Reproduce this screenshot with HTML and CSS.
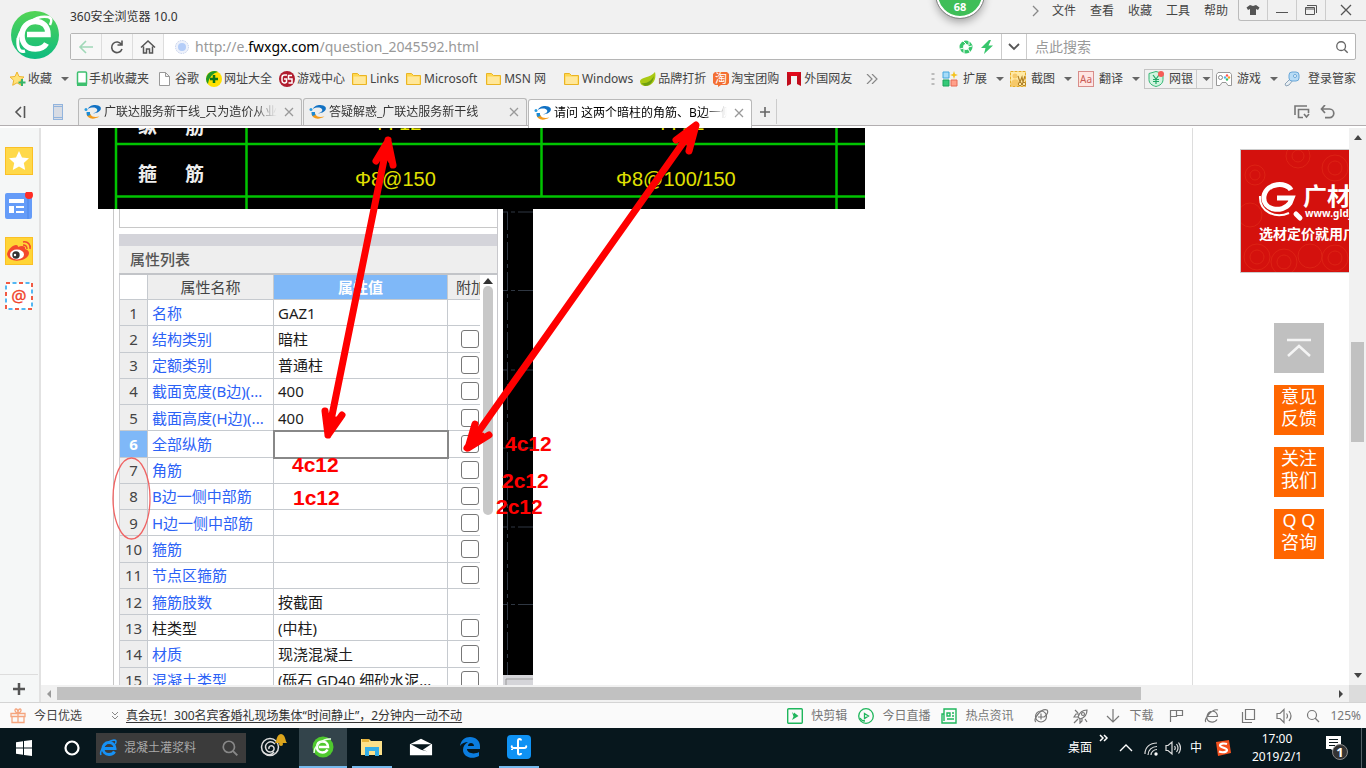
FILE: index.html
```html
<!DOCTYPE html>
<html lang="zh-CN">
<head>
<meta charset="utf-8">
<title>360安全浏览器 10.0</title>
<link rel="stylesheet" href="styles.css">
</head>
<body>
<svg class="defs" aria-hidden="true">
  <symbol id="folder" viewBox="0 0 16 16"><path d="M.5 2.500h5l2 2h7v9h-14z" fill="#ffd84f" stroke="#eab424"/><path d="M1.500 5.500h12v7.500h-12z" fill="#ffe79a"/></symbol>
  <symbol id="caret" viewBox="0 0 8 4"><path d="M0 0h8L4 4z" fill="#666"/></symbol>
  <symbol id="fav" viewBox="0 0 18 16"><path d="M4 5C5 .5 14-.5 16.500 3c1.500 3-2 6-7.500 6.300 3.500-1 5-2.500 4-4C12 3 7 3 4 5z" fill="#1272c4"/><path d="M2.500 9.500C3 14.500 9 16.500 15.500 12.500c-4.500 1-8.500.5-9.500-3z" fill="#f39a1b"/><path d="M2.500 8c0 1.500.5 3 1 4l3-1C6 10 5.800 9 6 8z" fill="#1a8ad6"/><circle cx="2" cy="5.500" r="1.500" fill="#2a9be0"/></symbol>
  <symbol id="close" viewBox="0 0 10 10"><path d="M1 1l8 8M9 1L1 9" stroke="#999" stroke-width="1.300"/></symbol>
  <symbol id="glass" viewBox="0 0 16 16"><circle cx="7" cy="7" r="5" fill="none" stroke="currentColor" stroke-width="1.500"/><path d="M10.500 10.500l4 4" stroke="currentColor" stroke-width="1.700"/></symbol>
</svg>

<header class="chrome">
  <div class="top">
    <svg class="logo" viewBox="0 0 50 50"><defs><linearGradient id="lg" x1="0" y1="0" x2="0" y2="1"><stop offset="0" stop-color="#53d454"/><stop offset="1" stop-color="#0dbb81"/></linearGradient></defs><circle cx="25" cy="25" r="24" fill="url(#lg)"/><path d="M17 24.500h21c0-8-5-13-12.500-13-8 0-13.500 6-13.500 14s5 13.500 13.500 13.500c5 0 9-2 11-5.500" fill="none" stroke="#fff" stroke-width="5.500"/><path d="M8 28C12 15 26 5 38 7c4 1 4 4 2 8" fill="none" stroke="#fff" stroke-width="2.500"/><path d="M8 28c-1 9 1 15 7 13" fill="none" stroke="#fff" stroke-width="3"/></svg>
    <div class="head">
      <div class="title-row">
        <span>360安全浏览器 10.0</span>
        <nav class="menu">
          <svg width="8" height="12" viewBox="0 0 8 12"><path d="M1 1l5 5-5 5" fill="none" stroke="#888" stroke-width="1.300"/></svg>
          <button>文件</button><button>查看</button><button>收藏</button><button>工具</button><button>帮助</button>
        </nav>
        <div class="wins">
          <button aria-label="皮肤"><svg width="14" height="12" viewBox="0 0 14 12"><path d="M4 1l3 1 3-1 3.500 2.500L12 6l-2-1v6H4V5L2 6 .5 3.500z" fill="#555"/></svg></button>
          <button aria-label="最小化"><svg width="14" height="12" viewBox="0 0 14 12"><path d="M1 8.500h12" stroke="#555"/></svg></button>
          <button aria-label="还原"><svg width="14" height="12" viewBox="0 0 14 12"><path d="M1.500 3.500h9v7h-9zM1 5h10M3 1.500h9.500V9" fill="none" stroke="#555"/></svg></button>
          <button aria-label="关闭"><svg width="14" height="12" viewBox="0 0 14 12"><path d="M2 1l10 10M12 1L2 11" stroke="#555" stroke-width="1.300"/></svg></button>
        </div>
      </div>
      <div class="address">
        <button class="nav" aria-label="后退"><svg width="16" height="14" viewBox="0 0 16 14"><path d="M15 7H2M8 1L2 7l6 6" fill="none" stroke="#a0d8b8" stroke-width="1.600"/></svg></button>
        <button class="nav" aria-label="刷新"><svg width="16" height="16" viewBox="0 0 16 16"><path d="M12.500 5.500A5.300 5.300 0 1 0 13 10M13 1.500V6H8.500" fill="none" stroke="#555" stroke-width="1.600"/></svg></button>
        <button class="nav" aria-label="主页"><svg width="16" height="16" viewBox="0 0 16 16"><path d="M1 8.500L8 2l7 6.500M3.500 7.500v6.500h3v-4h3v4h3V7.500" fill="none" stroke="#555" stroke-width="1.500"/></svg></button>
        <svg class="site" viewBox="0 0 14 14"><circle cx="7" cy="7" r="6.500" fill="#eef2fb" stroke="#c4cfea" stroke-dasharray="1.500 1"/><circle cx="7" cy="7" r="4" fill="#b4cdf8"/></svg>
        <span class="url">http://e.<b>fwxgx.com</b>/question_2045592.html</span>
        <svg width="14" height="14" viewBox="0 0 14 14"><circle cx="7" cy="7" r="4.700" fill="none" stroke="#37c66c" stroke-width="3.600"/><path d="M4 1l3 3M10 1v4M13 6l-4 1M11 12l-2-3M5 13v-4M1 9l4-1" stroke="#fff"/></svg>
        <svg class="bolt" width="12" height="14" viewBox="0 0 12 14"><path d="M8 0L0 8h4.500L3 14l9-8.500H7.500L10 0z" fill="#37c66c"/></svg>
        <button class="drop" aria-label="展开"><svg width="12" height="8" viewBox="0 0 12 8"><path d="M1 1l5 5 5-5" fill="none" stroke="#555" stroke-width="1.800"/></svg></button>
        <input class="search" type="text" placeholder="点此搜索" aria-label="搜索">
        <button class="go" aria-label="搜索"><svg width="14" height="14"><use href="#glass"/></svg></button>
      </div>
    </div>
    <div class="ball">68</div>
  </div>

  <div class="marks">
    <a href="#"><svg viewBox="0 0 16 16"><path d="M7 1l2 4.500 5 .5-3.700 3.300 1 5L7 11.800 2.700 14.300l1-5L0 6l5-.5z" fill="#ffe27a" stroke="#eeb52f"/><path d="M12 8v7M8.500 11.500h7" stroke="#36b56a" stroke-width="2"/></svg>收藏</a>
    <svg class="caret first"><use href="#caret"/></svg>
    <a href="#"><svg class="ph" viewBox="0 0 12 16"><rect x="1.500" y="1" width="9" height="13" rx="1" fill="#fff" stroke="#3dc06f" stroke-width="1.500"/><path d="M1 11.500h10V15H1z" fill="#3dc06f"/></svg>手机收藏夹</a>
    <a href="#" class="wide"><svg viewBox="0 0 16 16"><path d="M3.500 1.500h6l4 4v9h-10zM9.500 1.500v4h4" fill="#fff" stroke="#999"/></svg>谷歌</a>
    <a href="#"><svg viewBox="0 0 16 16"><circle cx="8" cy="8" r="8" fill="#ffe100"/><path d="M2 3a8 8 0 0 1 10-2C7 2 3 6 2 13A8 8 0 0 1 2 3z" fill="#219a27"/><path d="M8 4v8M4 8h8" stroke="#0b7517" stroke-width="2.500"/></svg>网址大全</a>
    <a href="#"><svg viewBox="0 0 16 16"><circle cx="8" cy="8" r="8" fill="#b01c2e"/><path d="M8 4H5.500A2.500 2.500 0 0 0 3 6.500v3A2.500 2.500 0 0 0 7.500 11V8H5M13 4.500H9.500V8H13v4H9.500" fill="none" stroke="#fff" stroke-width="1.500"/></svg>游戏中心</a>
    <a href="#"><svg><use href="#folder"/></svg>Links</a>
    <a href="#"><svg><use href="#folder"/></svg>Microsoft</a>
    <a href="#" class="msn"><svg><use href="#folder"/></svg>MSN 网</a>
    <a href="#"><svg><use href="#folder"/></svg>Windows</a>
    <a href="#"><svg viewBox="0 0 16 16"><path d="M15 1c2 8-3 14-9 14-4 0-6-2-6-5 1-4 10-3 15-9z" fill="#aac913"/><path d="M1 12c6 1 10-2 13-7-1 7-5 10-9 10z" fill="#6f9f10"/></svg>品牌打折</a>
    <a href="#"><svg viewBox="0 0 16 16"><path d="M2 1h12l2 2v9l-2 2H8l-3 2v-2H2l-2-2V3z" fill="#f36f33"/><text x="2" y="12" font-size="12" fill="#fff">淘</text></svg>淘宝团购</a>
    <a href="#"><svg viewBox="0 0 16 16"><path d="M1 1h14v14l-4-2V5H5v8l-4 2z" fill="#c10d1d"/><path d="M5 5h6L15 1H1z" fill="#e2081b"/></svg>外国网友</a>
    <svg class="more" viewBox="0 0 12 10"><path d="M1 0l5 5-5 5M6 0l5 5-5 5" fill="none" stroke="#888" stroke-width="1.200"/></svg>
    <div class="tools">
      <svg class="grip" viewBox="0 0 4 14"><path d="M2 1v13" stroke="#bbb" stroke-width="3" stroke-dasharray="2 3"/></svg>
      <a href="#"><svg viewBox="0 0 16 16"><path d="M1 1h6v6H1z" fill="#a8dcf8" stroke="#44a6de"/><path d="M1 9h6v6H1z" fill="#35c978" stroke="#1ba45a"/><path d="M9 9h6v6H9z" fill="#ffa08a" stroke="#e66b55"/><path d="M12 0l1 3 3 1-3 1-1 3-1-3-3-1 3-1z" fill="#f4c21d"/></svg>扩展</a><svg class="caret"><use href="#caret"/></svg>
      <a href="#"><svg viewBox="0 0 16 16"><rect x=".5" y=".5" width="15" height="15" fill="#ffeaa7" stroke="#e7ad27" stroke-dasharray="3 1"/><circle cx="5" cy="5" r="2.500" fill="#f6c96a"/><path d="M1 13c0-6 7-6 8-2v4H1z" fill="#f6c96a"/><path d="M8 5l2 6 2-5 1 5 2-6" fill="none" stroke="#b18127" stroke-width="1.200"/><circle cx="10" cy="13" r="1.700" fill="none" stroke="#b18127"/><circle cx="14" cy="13" r="1.700" fill="none" stroke="#b18127"/></svg>截图</a><svg class="caret"><use href="#caret"/></svg>
      <a href="#"><svg viewBox="0 0 16 16"><rect x=".5" y=".5" width="15" height="15" fill="#ffe5e2" stroke="#d88d8a"/><text x="2" y="12" font-size="10" fill="#c95b55">Aa</text></svg>翻译</a><svg class="caret"><use href="#caret"/></svg>
      <span class="bank"><a href="#"><svg viewBox="0 0 16 16"><path d="M8 .5l7 2v6c0 4-3 6-7 7-4-1-7-3-7-7v-6z" fill="#d0f4df" stroke="#36b775"/><path d="M5 4l3 4 3-4M8 8v5M5 8.500h6M5 10.500h6" fill="none" stroke="#21a764" stroke-width="1.200"/><circle cx="13" cy="3" r="3" fill="#f65d58"/></svg>网银</a><svg class="caret"><use href="#caret"/></svg></span>
      <a href="#"><svg viewBox="0 0 16 16"><path d="M2 1.500h12l1.500 2v11H12l-2-3H6l-2 3H.5v-11z" fill="#fff" stroke="#999"/><circle cx="4.500" cy="6.500" r="2" fill="none" stroke="#888"/><circle cx="9" cy="6.500" r="1.200" fill="#4db6ec"/><circle cx="11" cy="4.500" r="1.200" fill="#f55"/><circle cx="13" cy="6.500" r="1.200" fill="#fb9c27"/><circle cx="11" cy="8.500" r="1.200" fill="#3b6"/></svg>游戏</a><svg class="caret"><use href="#caret"/></svg>
      <a href="#" class="key"><svg viewBox="0 0 16 16"><path d="M7 7l-6 6 1 2 3-1 4-5" fill="#e8eef3" stroke="#8ea4b8"/><rect x="5" y="1" width="10" height="9" rx="3" fill="#b8dcf6" stroke="#6aa7d8"/><circle cx="11" cy="5" r="1.500" fill="#fff" stroke="#6aa7d8"/></svg>登录管家</a>
    </div>
  </div>

  <div class="tabs">
    <button class="fold" aria-label="收起"><svg width="12" height="12" viewBox="0 0 12 12"><path d="M7 1L2 6l5 5M10.500 0v12" fill="none" stroke="#555" stroke-width="1.600"/></svg></button>
    <button class="phone" aria-label="手机"><svg width="10" height="16" viewBox="0 0 10 16"><rect x=".5" y=".5" width="9" height="15" fill="#d8dce4" stroke="#92b4dd"/><path d="M1 2.500h8M1 13.500h8" stroke="#92b4dd"/></svg></button>
    <div class="tab"><svg class="fav"><use href="#fav"/></svg><a href="#">广联达服务新干线_只为造价从业者</a><button aria-label="关闭标签"><svg width="10" height="10"><use href="#close"/></svg></button></div>
    <div class="tab"><svg class="fav"><use href="#fav"/></svg><a href="#">答疑解惑_广联达服务新干线</a><button aria-label="关闭标签"><svg width="10" height="10"><use href="#close"/></svg></button></div>
    <div class="tab on"><svg class="fav"><use href="#fav"/></svg><a href="#">请问 这两个暗柱的角筋、B边一侧</a><button aria-label="关闭标签"><svg width="10" height="10"><use href="#close"/></svg></button></div>
    <button class="add" aria-label="新标签"><svg width="10" height="10" viewBox="0 0 10 10"><path d="M5 0v10M0 5h10" stroke="#666" stroke-width="1.600"/></svg></button>
    <div class="tabend">
      <svg width="16" height="14" viewBox="0 0 16 14"><path d="M1 10V1h12M9 12.500H4.500v-8h10V8M10 9l2.500 3L15 9" fill="none" stroke="#777" stroke-width="1.600"/></svg>
      <svg width="15" height="14" viewBox="0 0 15 14"><path d="M2 4h7.500a4.300 4.300 0 0 1 0 8.600H5M5 0L1.500 4 5 8" fill="none" stroke="#777" stroke-width="1.700"/></svg>
    </div>
  </div>
</header>

<main class="main">
  <aside class="side">
    <svg viewBox="0 0 28 28"><rect x=".5" y=".5" width="27" height="27" fill="#ffd94a" stroke="#fbc026"/><path d="M14 4l3 6.500 7 .8-5.200 4.800 1.400 6.900-6.200-3.500L7.800 23l1.400-6.900L4 11.300l7-.8z" fill="#fff"/></svg>
    <svg viewBox="0 0 28 28"><rect x="0" y="1" width="27" height="26" rx="2" fill="#659cf8"/><path d="M23 1v26" stroke="#4d86e8"/><path d="M4 7h15v4H4zM4 14h5v7H4zM11 14h8v2h-8zM11 19h8v2h-8z" fill="#fff"/><circle cx="24" cy="3" r="4" fill="#ff2c25"/></svg>
    <svg viewBox="0 0 28 28"><rect x=".5" y=".5" width="27" height="27" fill="#ffd536" stroke="#fbc026"/><path d="M2 17C3 12 8 8 11 8c2 0 2 1 2 2 4-2 8-1 7 2 4 1 5 4 3 7-4 6-20 7-21-2z" fill="#f3492c"/><ellipse cx="12" cy="17.500" rx="7" ry="5" fill="#fff"/><circle cx="11" cy="18" r="3.700" fill="#333"/><circle cx="10" cy="18" r="1.200" fill="#fff"/><path d="M18 8c3 0 4 2 4 4M18 5c5-1 8 3 7 7" fill="none" stroke="#f3492c" stroke-width="1.500"/></svg>
    <svg viewBox="0 0 28 28"><rect x="1" y="1" width="26" height="26" fill="#fff" stroke="#f15a43" stroke-width="2" stroke-dasharray="4 9"/><rect x="1" y="1" width="26" height="26" fill="none" stroke="#53b7f3" stroke-width="2" stroke-dasharray="4 9" stroke-dashoffset="-6.500"/><text x="14" y="20" text-anchor="middle" font-size="17" fill="#f0442c" stroke="#f0442c" stroke-width=".3">@</text></svg>
    <button aria-label="添加"><svg viewBox="0 0 14 14"><path d="M7 1v12M1 7h12" stroke="#555" stroke-width="2.500"/></svg></button>
  </aside>
  <div class="pane">
    <div class="view">
      <article class="article">
        <svg class="cad" viewBox="98 128 767 81">
          <path d="M98 128h767v81H98z"/>
          <path d="M116 128v81M246.500 128v81M541.500 128v68M836.500 128v81M116 144h749M116 196.500h749" stroke="#00c400" stroke-width="2.500"/>
          <g fill="#eee" font-size="19" class="hei"><text x="138" y="134">纵</text><text x="185" y="134">筋</text><text x="138" y="181">箍</text><text x="185" y="181">筋</text></g>
          <g fill="#e0e000" font-size="20" class="cadnum"><text x="372" y="130">4Φ12</text><text x="355" y="186">Φ8@150</text><text x="655" y="130">4Φ12</text><text x="616" y="186">Φ8@100/150</text></g>
        </svg>
        <div class="shot">
          <div class="panel">
            <div class="stub"></div>
            <div class="bar"></div>
            <h2>属性列表</h2>
            <div class="gridwrap">
              <table>
                <thead><tr><th class="n"></th><th>属性名称</th><th class="cur">属性值</th><th class="x">附加</th></tr></thead>
                <tbody>
                <tr><td>1</td><td>名称</td><td>GAZ1</td><td></td></tr>
                <tr><td>2</td><td>结构类别</td><td>暗柱</td><td><input type="checkbox" aria-label="附加 2"></td></tr>
                <tr><td>3</td><td>定额类别</td><td>普通柱</td><td><input type="checkbox" aria-label="附加 3"></td></tr>
                <tr><td>4</td><td>截面宽度(B边)(...</td><td>400</td><td><input type="checkbox" aria-label="附加 4"></td></tr>
                <tr><td>5</td><td>截面高度(H边)(...</td><td>400</td><td><input type="checkbox" aria-label="附加 5"></td></tr>
                <tr class="sel"><td>6</td><td>全部纵筋</td><td></td><td><input type="checkbox" aria-label="附加 6"></td></tr>
                <tr><td>7</td><td>角筋</td><td></td><td><input type="checkbox" aria-label="附加 7"></td></tr>
                <tr><td>8</td><td>B边一侧中部筋</td><td></td><td><input type="checkbox" aria-label="附加 8"></td></tr>
                <tr><td>9</td><td>H边一侧中部筋</td><td></td><td><input type="checkbox" aria-label="附加 9"></td></tr>
                <tr><td>10</td><td>箍筋</td><td></td><td><input type="checkbox" aria-label="附加 10"></td></tr>
                <tr><td>11</td><td>节点区箍筋</td><td></td><td><input type="checkbox" aria-label="附加 11"></td></tr>
                <tr><td>12</td><td>箍筋肢数</td><td>按截面</td><td></td></tr>
                <tr><td>13</td><td class="blk">柱类型</td><td>(中柱)</td><td><input type="checkbox" aria-label="附加 13"></td></tr>
                <tr><td>14</td><td>材质</td><td>现浇混凝土</td><td><input type="checkbox" aria-label="附加 14"></td></tr>
                <tr><td>15</td><td>混凝土类型</td><td>(砾石 GD40 细砂水泥...</td><td><input type="checkbox" aria-label="附加 15"></td></tr>
                </tbody>
              </table>
              <div class="gscroll"><svg width="10" height="6" viewBox="0 0 10 6"><path d="M0 6l5-6 5 6z" fill="#333"/></svg><i></i></div>
            </div>
          </div>
          <svg class="strip" viewBox="503 209 30 476"><path d="M503 209h30v466h-30z"/><path d="M503 675h30v10h-30z" fill="#d5d5d9"/><path d="M506 685v-6h27" fill="none" stroke="#999"/><path d="M507.500 212v463" stroke="#2f3742" stroke-dasharray="18 4 4 4"/><path d="M503 212h30M503 290.500h30M503 370h30M503 448h30M503 527h30M503 604.500h30" stroke="#2f3742" stroke-dasharray="5 3 4 3 20"/></svg>
        </div>
      </article>
      <aside class="right">
        <a href="#" class="ad" aria-label="广材网"><svg viewBox="1241 150 108 122">
          <path d="M1241 150h108v122h-108z" fill="#d4110d"/>
          <g fill="none" stroke="#e02a18" opacity=".7"><circle cx="1255" cy="175" r="10"/><circle cx="1255" cy="175" r="5"/><circle cx="1298" cy="156" r="12"/><circle cx="1298" cy="156" r="6"/><circle cx="1335" cy="168" r="13"/><circle cx="1335" cy="168" r="7"/><circle cx="1257" cy="257" r="13"/><circle cx="1257" cy="257" r="7"/><circle cx="1284" cy="262" r="13"/><circle cx="1284" cy="262" r="7"/><circle cx="1310" cy="256" r="12"/><circle cx="1335" cy="258" r="13"/><circle cx="1335" cy="258" r="7"/><circle cx="1250" cy="215" r="12"/></g>
          <path d="M1291 190c-4-8-24-8-27 6-2 14 18 18 26 7l2-5h-15" fill="none" stroke="#fff" stroke-width="5"/><path d="M1260 196c-1 16 16 23 29 17" fill="none" stroke="#fff" stroke-width="2"/><path d="M1296 214l4 4" stroke="#fff" stroke-width="5" stroke-linecap="round"/>
          <g fill="#fff" font-weight="700"><text x="1303" y="205" font-size="24">广材</text><text x="1305" y="217" font-size="10">www.gldjc.com</text><text x="1259" y="239" font-size="14">选材定价就用广材</text></g>
        </svg></a>
        <div class="floats">
          <a href="#" class="up" aria-label="返回顶部"><svg width="26" height="20" viewBox="0 0 26 20"><path d="M1 2h24M2 18L13 8l11 10" fill="none" stroke="#f4f4f4" stroke-width="2.500"/></svg></a>
          <a href="#">意见<br>反馈</a><a href="#">关注<br>我们</a><a href="#">Q Q<br>咨询</a>
        </div>
      </aside>
    </div>
    <div class="hs"><svg width="6" height="8" viewBox="0 0 6 8"><path d="M5 0v8L1 4z" fill="#999"/></svg><div><i></i></div><svg width="6" height="8" viewBox="0 0 6 8"><path d="M1 0v8l4-4z" fill="#444"/></svg></div>
  </div>
  <div class="vs"><svg width="8" height="5" viewBox="0 0 8 5"><path d="M0 5l4-5 4 5z" fill="#444"/></svg><div><i></i></div><svg width="8" height="5" viewBox="0 0 8 5"><path d="M0 0l4 5 4-5z" fill="#444"/></svg><b></b></div>

  <svg class="notes" viewBox="0 128 1366 557" width="1366" height="557">
    <g fill="none" stroke="red" stroke-width="7" stroke-linecap="round" stroke-linejoin="round">
      <path d="M388 140L328 435M376 161l12-20 5 24M325 411l3 24 14-20M383 158l5-12 3 14M328 418v12l9-10"/>
      <path d="M695 126L467 448M676 140l20-15-7 26M475 424l-7 24 21-13M684 141l9-11-3 14M477 433l-6 11 11-8"/>
    </g>
    <ellipse cx="131.500" cy="498.500" rx="18.500" ry="40.500" fill="none" stroke="#f06464" stroke-width="1.300"/>
    <g class="red"><text x="292" y="472">4c12</text><text x="293" y="505">1c12</text><text x="505" y="451">4c12</text><text x="502" y="488">2c12</text><text x="496" y="514">2c12</text></g>
  </svg>
</main>

<div class="status">
  <a href="#" class="gift"><svg viewBox="0 0 16 16"><path d="M1 5.500h14v3H1zM2 8.500h12v6H2zM8 5.500v9M8 5C5 5 4 1 6 1s2 4 2 4 0-4 2-4 1 4-2 4" fill="none" stroke="#f5a57e" stroke-width="1.300"/></svg>今日优选</a>
  <svg class="dbl" viewBox="0 0 8 8"><path d="M1 0l3 3 3-3M1 4l3 3 3-3" fill="none" stroke="#888"/></svg>
  <a href="#" class="news">真会玩！300名宾客婚礼现场集体“时间静止”，2分钟内一动不动</a>
  <div class="stools">
    <a href="#"><svg viewBox="0 0 16 16"><rect x=".7" y=".7" width="14.600" height="14.600" rx="1" fill="none" stroke="#1fb65c" stroke-width="1.400"/><path d="M5 4l2 2v-1.500L11.500 8 5 12l1.500-3.500z" fill="#1fb65c"/></svg>快剪辑</a>
    <a href="#"><svg viewBox="0 0 16 16"><circle cx="8" cy="8" r="7.300" fill="none" stroke="#1fb65c" stroke-width="1.300"/><path d="M6.500 5.500l4 2.500-4 2.500zM2 10c1 2 3 3 5 3" fill="none" stroke="#1fb65c" stroke-width="1.300"/></svg>今日直播</a>
    <a href="#"><svg viewBox="0 0 16 16"><path d="M3 1h12v14H1V6h2zM3 5v8M6 5h3v3H6zM11 5h2M11 8h2M6 11h7" fill="none" stroke="#1fb65c" stroke-width="1.400"/></svg>热点资讯</a>
    <button aria-label="加速" class="i1"><svg viewBox="0 0 16 16"><circle cx="8" cy="8.500" r="5.500"/><path d="M3 14C-1 12 8 0 14 2c2 2-1 6-3 7H5M8 5.500v6"/></svg></button>
    <button aria-label="火箭" class="i2"><svg viewBox="0 0 16 16"><path d="M14 2C9 2 6 6 5 9l2 2c4-1 7-4 7-9zM6 6H3L1 9h4M9 10v3l-2 2v-4M5 11l-4 4M2 2l3 3M12 11l2 3"/><circle cx="10" cy="6" r="1.500"/></svg></button>
    <button class="dl"><svg viewBox="0 0 16 16"><path d="M8 1v13M2 8l6 6 6-6"/></svg>下载</button>
    <button aria-label="标记"><svg viewBox="0 0 16 16"><path d="M2.500 14V2.500h6v6h-6M8.500 2.500h6v5h-6"/></svg></button>
    <button aria-label="内核"><svg viewBox="0 0 16 16"><path d="M3 8.500h10.500c0-7-9.500-7-10.500 0-1 7 8 6.500 10 3M2 14C-1 12 8 0 14 2"/></svg></button>
    <button aria-label="窗口"><svg viewBox="0 0 16 16"><path d="M5.500 1.500h9v10h-9zM2.500 4v10.500H12"/></svg></button>
    <button aria-label="声音"><svg viewBox="0 0 16 16"><path d="M1 5.500h3l4-4v13l-4-4H1zM10.500 5.500q2 2.500 0 5M13 3q4 5 0 10"/></svg></button>
    <button class="zoom"><svg viewBox="0 0 16 16"><circle cx="7" cy="7" r="4.500"/><path d="M10 10l4 4"/></svg>125%</button>
  </div>
</div>

<footer class="task">
  <button aria-label="开始"><svg viewBox="0 0 16 16"><path d="M0 2.300L7 1.300v6.200H0zM8 1.100L16 0v7.500H8zM0 8.500h7v6.200l-7-1zM8 8.500h8V16l-8-1.100z" fill="#fff"/></svg></button>
  <button aria-label="Cortana"><svg viewBox="0 0 16 16"><circle cx="8" cy="8" r="6.500" fill="none" stroke="#fff" stroke-width="2.200"/></svg></button>
  <label class="tsearch"><svg class="ie" viewBox="0 0 18 18"><path d="M5 9.500h11c0-4-3-6-6-6-4 0-6 3-6 6s2 6 6 6c2.500 0 4.500-1 5.500-3" fill="none" stroke="#1691f5" stroke-width="3"/><path d="M2 16C0 12 7 2 15 1c3 0 2 3 1 4" fill="none" stroke="#1691f5" stroke-width="1.500"/></svg><input type="text" value="混凝土灌浆料" aria-label="搜索"><svg class="mg"><use href="#glass"/></svg></label>
  <button class="swirl" aria-label="助手"><svg viewBox="0 0 30 28"><g fill="none" stroke="#ddd" stroke-width="1.500"><circle cx="12" cy="16" r="8.500"/><path d="M17 13c-5-5-11 0-9 5s9 3 8-1-6-2-5 1M5 21c4 4 9 3 11 0"/></g><path d="M17 12c2-2 1-8 6-9 5 1 4 7 6 9z" fill="#dca51c"/><circle cx="23" cy="13" r="2" fill="#dca51c"/></svg></button>
  <button class="tile act" aria-label="360浏览器"><svg viewBox="0 0 22 22"><circle cx="11" cy="11" r="10.500" fill="#4fc92e"/><path d="M7 11h9c0-4-3-5.500-5.500-5.500-4 0-5.500 3-5.500 6s2.500 5 5.500 5c2.500 0 4-1 5-3" fill="none" stroke="#fff" stroke-width="2.500"/><path d="M2 17C2 10 11 2 19 3" fill="none" stroke="#e9ffe4" stroke-width="1.500"/></svg></button>
  <button class="tile run" aria-label="文件资源管理器"><svg viewBox="0 0 22 22"><path d="M0 3h8l2 2h11v14H0z" fill="#fce08a"/><path d="M1 3h7v3H1z" fill="#e7b43c"/><path d="M4 20v-9h14v9h-4v-5H8v5z" fill="#34aee8"/></svg></button>
  <button class="tile" aria-label="邮件"><svg viewBox="0 0 26 22"><path d="M1 8l12-6 12 6v12H1z" fill="#fff"/><path d="M2 8h22l-9 6 5 2-7-2z" fill="#07171d"/></svg></button>
  <button class="tile" aria-label="Edge"><svg viewBox="0 0 22 22"><path d="M1 10C2 4 6 1 11 1c6 0 10 4 10 9v3H8c0 4 7 6 12 3v4C13 24 4 21 4 14c0-4 2-6 5-8-3 0-6 1-8 4zm8 0h6c0-4-6-4-6 0z" fill="#0b7de0"/></svg></button>
  <button class="tile run" aria-label="广联达"><svg class="big" viewBox="0 0 24 24"><rect width="24" height="24" rx="4" fill="#0f92f4"/><path d="M14 5.500q0-1.500-1.500-1.500T11 6v12q0 1.500 1.500 1.500T14 18M5 10.500q-1 2.500 2 2.500h10q3 0 2-2.500M5 15l0-1" fill="none" stroke="#fff" stroke-width="2"/></svg></button>
  <div class="tray">
    <span>桌面</span><svg class="chev" viewBox="0 0 10 8"><path d="M1 1l3 3-3 3M5 1l3 3-3 3" fill="none" stroke="#fff" stroke-width="1.500"/></svg>
    <svg viewBox="0 0 16 16"><path d="M2 11l6-6 6 6" fill="none" stroke="#fff" stroke-width="1.400"/></svg>
    <svg class="wifi" viewBox="0 0 16 16"><g fill="none" stroke="#ddd" stroke-width="1.200"><path d="M2 14C2 7 7 3 14 3M5 15c0-5 4-8.500 9-8.500M8 15c0-3 3-5.500 6-5.500"/></g><circle cx="13" cy="14" r="1.700" fill="#fff"/></svg>
    <svg class="spk" viewBox="0 0 16 16"><path d="M1 5.500h2l4-3.500v12l-4-3.500H1zM9.500 6q1.500 2 0 4M11.500 4q3 4 0 8M13.500 2.500q4 5.500 0 11" fill="none" stroke="#ddd" stroke-width="1.200"/></svg>
    <span>中</span>
    <svg class="sg" viewBox="0 0 16 16"><path d="M1 2l13-2 2 13-13 3z" fill="#f4511e"/><path d="M12 4c-3-1-7-.5-7 1.500S12 8 12 10s-4 3-8 1.500" fill="none" stroke="#fff" stroke-width="2.200"/></svg>
    <time>17:00<br>2019/2/1</time>
    <svg class="note" viewBox="0 0 26 26"><path d="M1 1h15v13h-6v4l-4-4H1z" fill="#fff"/><path d="M4 4.500h9M4 7.500h9M4 10.500h6" stroke="#0a181d"/><circle cx="15" cy="17" r="7.500" fill="#333" stroke="#8a8a8a"/><text x="15" y="22" text-anchor="middle" font-size="13" font-weight="700" fill="#fff">1</text></svg>
  </div>
</footer>
</body>
</html>
```

FILE: styles.css
```css
* { box-sizing: border-box; }
body { margin: 0; height: 100vh; display: flex; flex-direction: column; overflow: hidden; background: #fff; color: #444; font: 12px/16px "Noto Sans", "Noto Sans CJK SC", sans-serif; }
button { border: 0; padding: 0; background: none; font: inherit; color: inherit; display: flex; align-items: center; justify-content: center; }
a { color: inherit; text-decoration: none; }
svg { flex: none; display: block; }
input { font: inherit; min-width: 0; }
.defs { position: absolute; width: 0; height: 0; }

/* browser chrome */
.chrome { flex: none; background: #f1f1f1; border-bottom: 1px solid #b2aeb0; margin-bottom: 2px; }
.top { display: flex; position: relative; }
.logo { width: 50px; height: 50px; margin: 10px 10px 0; }
.head { flex: 1; min-width: 0; }
.title-row { display: flex; height: 33px; align-items: center; }
.title-row > span { color: #333; }
.menu { display: flex; gap: 14px; align-items: center; margin: 0 10px 12px auto; }
.menu svg { margin-right: -2px; }
.wins { display: flex; align-self: flex-start; height: 21px; border: 1px solid #bbb; border-width: 0 0 1px 1px; border-radius: 0 0 0 3px; }
.wins button { width: 29px; border-right: 1px solid #ccc; }
.wins button:last-child { width: 40px; border: 0; }
.ball { position: absolute; left: 936px; top: -30px; width: 48px; height: 48px; border: 2px solid #fff; outline: 1px solid #888; border-radius: 50%; background: #3fbe58; color: #fff; font-weight: 700; font-size: 11px; text-align: center; padding-top: 27px; box-shadow: 0 4px 8px #0005; }
.address { display: flex; align-items: center; height: 27px; margin-right: 10px; background: #fff; border: 1px solid #b5b5b5; border-radius: 2px; }
.nav { width: 31px; height: 25px; background: #f7f7f7; border-right: 1px solid #ddd; }
.site { width: 14px; height: 14px; margin: 0 6px 0 11px; }
.url { flex: 1; font-size: 14px; color: #999; white-space: nowrap; }
.url b { font-weight: 400; color: #000; }
.bolt { margin: 0 8px 0 8px; }
.drop { width: 26px; height: 25px; border: 1px solid #ccc; border-width: 0 1px; }
.search { width: 302px; border: 0; outline: 0; padding: 0 8px; font-size: 14px; background: none; }
.search::placeholder { color: #999; }
.go { width: 26px; color: #666; }

.marks { display: flex; align-items: center; height: 38px; padding: 0 10px; gap: 7px; white-space: nowrap; }
.marks a { display: flex; align-items: center; gap: 2px; }
.marks a svg { width: 16px; height: 16px; }
.marks a .ph { width: 12px; margin-right: -1px; }
.marks .wide { gap: 3px; }
.marks .msn { margin: 0 11px 0 2px; }
.caret { width: 8px; height: 4px; }
.marks .first { margin: 0 0 0 2px; }
.more { width: 12px; height: 10px; margin-left: 7px; }
.tools { display: flex; align-items: center; margin-left: auto; gap: 7px; }
.tools a { gap: 5px; }
.tools > .caret { margin: 0 -1px 0 2px; }
.grip { width: 4px; height: 14px; }
.bank { display: flex; align-items: center; height: 20px; border: 1px solid #c4c4c4; padding: 0 1px 0 3px; margin: 0 -4px 0 -2px; }
.bank .caret { border-left: 1px solid #ccc; width: 15px; height: 18px; padding: 7px 0 7px 5px; margin-left: 3px; }
.tools .key { gap: 8px; }

.tabs { display: flex; height: 27px; align-items: center; }
.fold { width: 12px; margin-left: 14px; }
.phone { width: 10px; margin: 0 15px 0 27px; }
.tab { flex: 0 1 224px; min-width: 60px; height: 27px; display: flex; align-items: center; padding: 0 7px 0 5px; margin-right: 1px; border: 1px solid #b9b9b9; border-bottom: 0; border-radius: 3px 3px 0 0; background: #eee; color: #333; }
.tab a { flex: 1; min-width: 0; margin: 0 7px 0 2px; overflow: hidden; white-space: nowrap; mask-image: linear-gradient(to left, transparent, #000 24px); }
.tab.on { background: #fff; color: #000; height: 29px; margin-bottom: -3px; padding-bottom: 2px; }
.fav { width: 18px; height: 16px; }
.add { width: 24px; height: 25px; border-right: 1px solid #ccc; }
.tabend { margin: 0 31px 0 auto; display: flex; gap: 10px; }

/* page */
.main { flex: 1; min-height: 0; display: flex; position: relative; }
.side { width: 41px; flex: none; display: flex; flex-direction: column; align-items: center; gap: 17px; padding: 19px 2px 0 0; background: #f5f7f7; border-right: 2px solid #e2e2e2; }
.side svg { width: 28px; height: 28px; }
.side button { margin-top: auto; width: 39px; height: 28px; border-top: 1px solid #ddd; }
.side button svg { width: 14px; height: 14px; }
.pane { flex: 1; min-width: 0; display: flex; flex-direction: column; }
.view { flex: 1; min-height: 0; overflow: hidden; display: flex; }
.article { flex: 1; min-width: 0; padding-left: 57px; }
.cad { width: 767px; height: 81px; }
.hei { font-family: "Noto Sans CJK SC", sans-serif; font-weight: 700; }
.cadnum { font-family: "Liberation Sans", sans-serif; }
.shot { display: flex; margin-left: 15px; border-left: 1px solid #c8c8c8; }
.panel { width: 384px; margin-right: 5px; padding-left: 5px; border-right: 1px solid #c8c8cc; }
.stub { height: 19px; border: 1px solid #c8c8c8; border-width: 0 0 1px 1px; margin-bottom: 6px; }
.bar { height: 12px; background: #d4d4da; }
.panel h2 { margin: 0; height: 29px; padding-left: 11px; font-size: 15px; line-height: 26px; font-weight: 500; color: #555; background: #eee; border-bottom: 2px solid #c2c4c8; }
.gridwrap { display: flex; border-left: 1px solid #d0d0d4; }
table { table-layout: fixed; width: 360px; height: 419px; border-collapse: separate; border-spacing: 0; font-size: 15px; line-height: 20px; color: #1c1c1c; white-space: nowrap; }
th, td { padding: 0 0 0 4px; border: 1px solid #c6cacf; border-width: 0 1px 1px 0; overflow: hidden; text-align: left; }
tr > :last-child { border-right: 0; padding-left: 13px; }
th { width: 126px; height: 25px; padding: 0; text-align: center; font-weight: 400; color: #444; background: #eee; }
.n { width: 28px; background: #fff; }
.cur { width: 174px; background: #7fb8f8; color: #fff; font-weight: 700; }
thead .x { width: 32px; padding-left: 8px; text-align: left; }
td { height: 26px; }
td:first-child { text-align: center; padding: 0; background: #eee; color: #444; }
td:nth-child(2) { color: #2c62f6; }
td.blk { color: #1c1c1c; }
.sel td:first-child { background: #7fb8f8; color: #fff; font-weight: 700; }
.sel td:nth-child(3) { outline: 2px solid #888; outline-offset: -1px; }
td input { appearance: none; display: block; width: 18px; height: 18px; margin: 0; border: 1px solid #777; border-radius: 3px; background: #fff; }
.gscroll { flex: 1; display: flex; flex-direction: column; align-items: center; padding: 3px 2px 0 0; }
.gscroll i { width: 10px; height: 229px; margin-top: 2px; border-radius: 5px; background: #c8c8c8; }
.strip { width: 30px; height: 476px; }

.right { width: 157px; flex: none; border-left: 1px solid #ddd; padding-top: 21px; overflow: hidden; }
.ad { display: block; width: 109px; margin-left: 47px; border: 1px solid #ccc; border-right: 0; }
.ad svg { width: 108px; height: 122px; }
.floats { display: flex; flex-direction: column; gap: 12px; width: 50px; margin: 50px 0 0 81px; }
.floats a { height: 50px; background: #f60; color: #fff; font-size: 18px; line-height: 22px; text-align: center; }
.floats .up { background: #c0c0c0; padding: 15px 12px; }

.hs, .vs { display: flex; align-items: center; background: #f1f1f1; flex: none; }
.hs { height: 17px; padding: 0 5px; }
.hs div { flex: 1; padding: 0 5px; margin-right: 5px; }
.hs i { display: block; width: calc(85% + 4px); height: 13px; background: #c1c1c1; }
.vs { width: 17px; flex-direction: column; padding-top: 7px; }
.vs div { flex: 1; padding-top: 202px; }
.vs i { display: block; width: 13px; height: 100px; background: #c1c1c1; }
.vs b { width: 17px; height: 17px; margin-top: 7px; background: #dcdcdc; }
.notes { position: absolute; left: 0; top: 0; overflow: visible; pointer-events: none; }
.red { font: 700 21px "Liberation Sans", sans-serif; fill: red; }

/* status bar */
.status { flex: none; height: 26px; display: flex; align-items: center; padding: 0 5px 0 10px; background: #fafafa; border-top: 1px solid #d4d4d4; white-space: nowrap; color: #777; }
.status svg { width: 16px; height: 16px; }
.gift { display: flex; gap: 8px; align-items: center; color: #444; }
.status .dbl { width: 8px; height: 8px; margin: 0 7px 0 29px; }
.news { color: #333; text-decoration: underline; text-underline-offset: 2px; }
.stools { display: flex; align-items: center; margin-left: auto; gap: 20px; }
.stools a { display: flex; gap: 8px; margin-right: -9px; }
.stools button { fill: none; stroke: #777; stroke-width: 1.2px; }
.stools .i1 { margin-left: 9px; }
.stools .i2 { margin-left: 4px; }
.stools .dl { gap: 8px; margin-left: -4px; margin-right: -5px; stroke-width: 1px; }
.stools .zoom { gap: 9px; margin-left: -7px; }
.stools button { font-size: 12px; }
.stools .dl, .stools .zoom { stroke: none; }
.stools .dl svg, .stools .zoom svg { stroke: #777; stroke-width: 1.2px; }

/* taskbar */
.task { flex: none; height: 40px; display: flex; align-items: center; background: #07171d; color: #fff; }
.task > button { width: 48px; height: 40px; }
.task svg { width: 16px; height: 16px; }
.tsearch { width: 150px; height: 30px; display: flex; align-items: center; padding: 0 7px 0 3px; background: #3b3b3b; color: #888; }
.tsearch input { flex: 1; border: 0; outline: 0; padding: 0; margin-left: 7px; background: none; color: #aaa; }
.task .ie { width: 18px; height: 18px; }
.task .mg { width: 18px; height: 18px; }
.task .swirl { width: 53px; }
.task .swirl svg { width: 30px; height: 28px; margin-bottom: 6px; }
.task .tile { margin-right: 1px; border-bottom: 2px solid transparent; }
.task .tile svg { width: 24px; height: 22px; }
.task .tile .big { height: 24px; }
.task .act { background: #33444b; border-color: #76b9ed; }
.task .run { width: 40px; margin: 0 5px 0 4px; border-color: #76b9ed; }
.tray { display: flex; align-items: center; height: 40px; margin: 0 4px 0 auto; padding-right: 10px; border-right: 1px solid #526066; }
.tray .chev { width: 10px; height: 8px; margin: 0 9px 20px 7px; }
.tray .wifi { margin-left: 9px; }
.tray .spk { margin: 0 9px 0 6px; }
.tray .sg { margin: 0 20px 0 13px; }
time { text-align: center; line-height: 18px; width: 52px; }
.tray .note { width: 26px; height: 26px; margin-left: 22px; }
```
